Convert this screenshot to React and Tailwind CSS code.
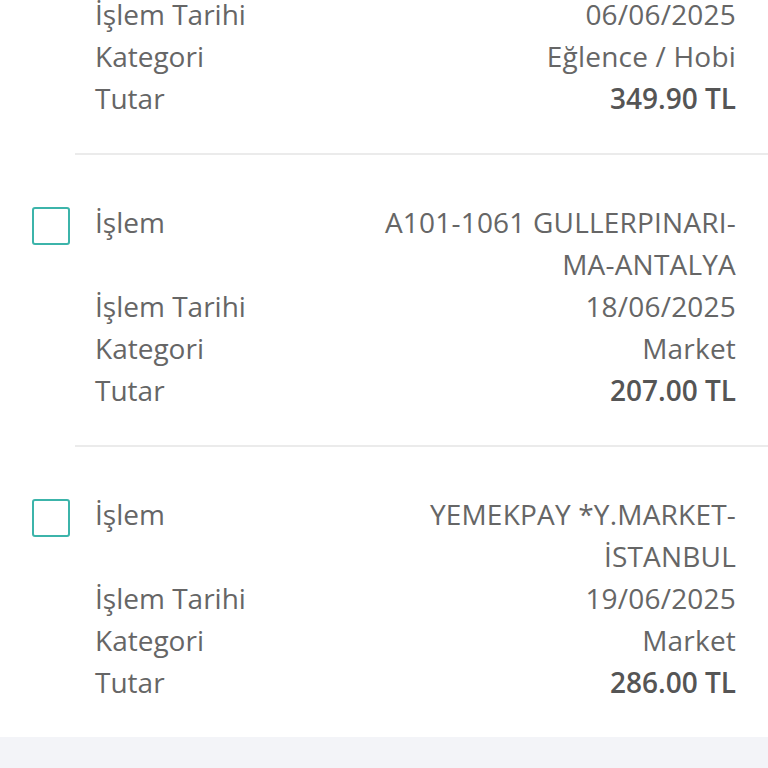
import React from 'react'

const items = [
  { merchant: ['TRENDYOL-ISTANBUL'], date: '06/06/2025', category: 'Eğlence / Hobi', amount: '349.90 TL' },
  { merchant: ['A101-1061 GULLERPINARI-', 'MA-ANTALYA'], date: '18/06/2025', category: 'Market', amount: '207.00 TL' },
  { merchant: ['YEMEKPAY *Y.MARKET-', 'İSTANBUL'], date: '19/06/2025', category: 'Market', amount: '286.00 TL' },
]

const Row = ({ label, children, bold }) => (
  <div className='flex justify-between items-start'>
    <p className='text-[#666666]'>{label}</p>
    <div className={`text-right ${bold ? 'font-semibold text-[#555555]' : 'text-[#666666] tracking-[0.2px]'}`}>{children}</div>
  </div>
)

const Transaction = ({ item, first, last }) => (
  <div>
    <div className={`flex pl-[32px] pr-[32px] pb-[34px] ${first ? '' : 'pt-[46px]'}`}>
      <div className='mt-[6px] w-[38px] h-[38px] shrink-0 border-2 border-[#3cb4aa] rounded-[3px]'></div>
      <div className='flex-1 ml-[25px]'>
        <Row label='İşlem'>
          {item.merchant.map((line, i) => <p key={i}>{line}</p>)}
        </Row>
        <Row label='İşlem Tarihi'>{item.date}</Row>
        <Row label='Kategori'>{item.category}</Row>
        <Row label='Tutar' bold>{item.amount}</Row>
      </div>
    </div>
    {!last && <div className='ml-[75px] h-[2px] bg-[#ebebeb]'></div>}
  </div>
)

export default function App() {
  return (
    <div className='h-[768px] overflow-hidden flex flex-col bg-white text-[28px] leading-[42px]' style={{ fontFamily: '"Open Sans", "Liberation Sans", sans-serif' }}>
      <div className='-mt-[49px]'>
        {items.map((item, i) => (
          <Transaction key={i} item={item} first={i === 0} last={i === items.length - 1} />
        ))}
      </div>
      <div className='flex-1 bg-[#f3f4f8]'></div>
    </div>
  )
}
